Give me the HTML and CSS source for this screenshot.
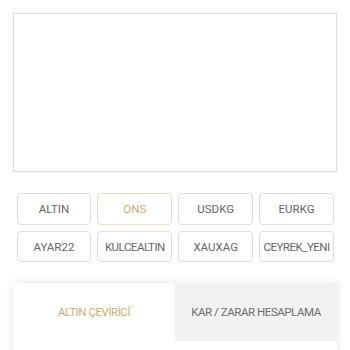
FILE: index.html
```html
<!DOCTYPE html>
<html>
<head>
<meta charset="utf-8">
<link rel="stylesheet" href="styles.css">
</head>
<body>
<div class="page">
  <div class="chart"></div>
  <div class="symbols">
    <div class="sym">ALTIN</div>
    <div class="sym active">ONS</div>
    <div class="sym">USDKG</div>
    <div class="sym">EURKG</div>
    <div class="sym">AYAR22</div>
    <div class="sym long">KULCEALTIN</div>
    <div class="sym">XAUXAG</div>
    <div class="sym long">CEYREK_YENI</div>
  </div>
  <div class="card">
    <div class="tabs">
      <div class="tab active">ALTIN ÇEVİRİCİ</div>
      <div class="tab">KAR / ZARAR HESAPLAMA</div>
    </div>
    <div class="card-body"></div>
  </div>
</div>
</body>
</html>
```
FILE: styles.css
```css
html, body {
  margin: 0;
  padding: 0;
  background: #fff;
  font-family: Roboto, "Liberation Sans", sans-serif;
}
.page {
  width: 350px;
  height: 350px;
  overflow: hidden;
  padding-top: 13px;
  box-sizing: border-box;
}
.chart {
  margin: 0 13px;
  height: 159px;
  border: 1px solid #dcdcdc;
  box-sizing: border-box;
}
.symbols {
  margin: 21px 16px 0 16.5px;
  display: grid;
  grid-template-columns: repeat(4, 1fr);
  grid-template-rows: 32px 31px;
  gap: 6px;
}
.sym {
  border: 1px solid #dedede;
  border-radius: 4px;
  display: flex;
  align-items: center;
  justify-content: center;
  font-size: 11.5px;
  color: #666;
  white-space: nowrap;
}
.sym.long {
  letter-spacing: -0.5px;
}
.sym.active {
  border-color: #e8dec6;
  color: #cbae6a;
}
.card {
  margin: 21px 13px 0 13px;
  background: #fff;
  box-shadow: 0 0 9px rgba(0,0,0,0.11);
  border-radius: 2px;
  height: 100px;
}
.tabs {
  display: flex;
  height: 58px;
}
.tab {
  flex: 1;
  display: flex;
  align-items: center;
  justify-content: center;
  font-size: 11.5px;
  color: #6e6e6e;
  background: #f1f1f1;
  letter-spacing: -0.45px;
  white-space: nowrap;
}
.tab.active {
  background: #fff;
  color: #cbae6a;
}
```
